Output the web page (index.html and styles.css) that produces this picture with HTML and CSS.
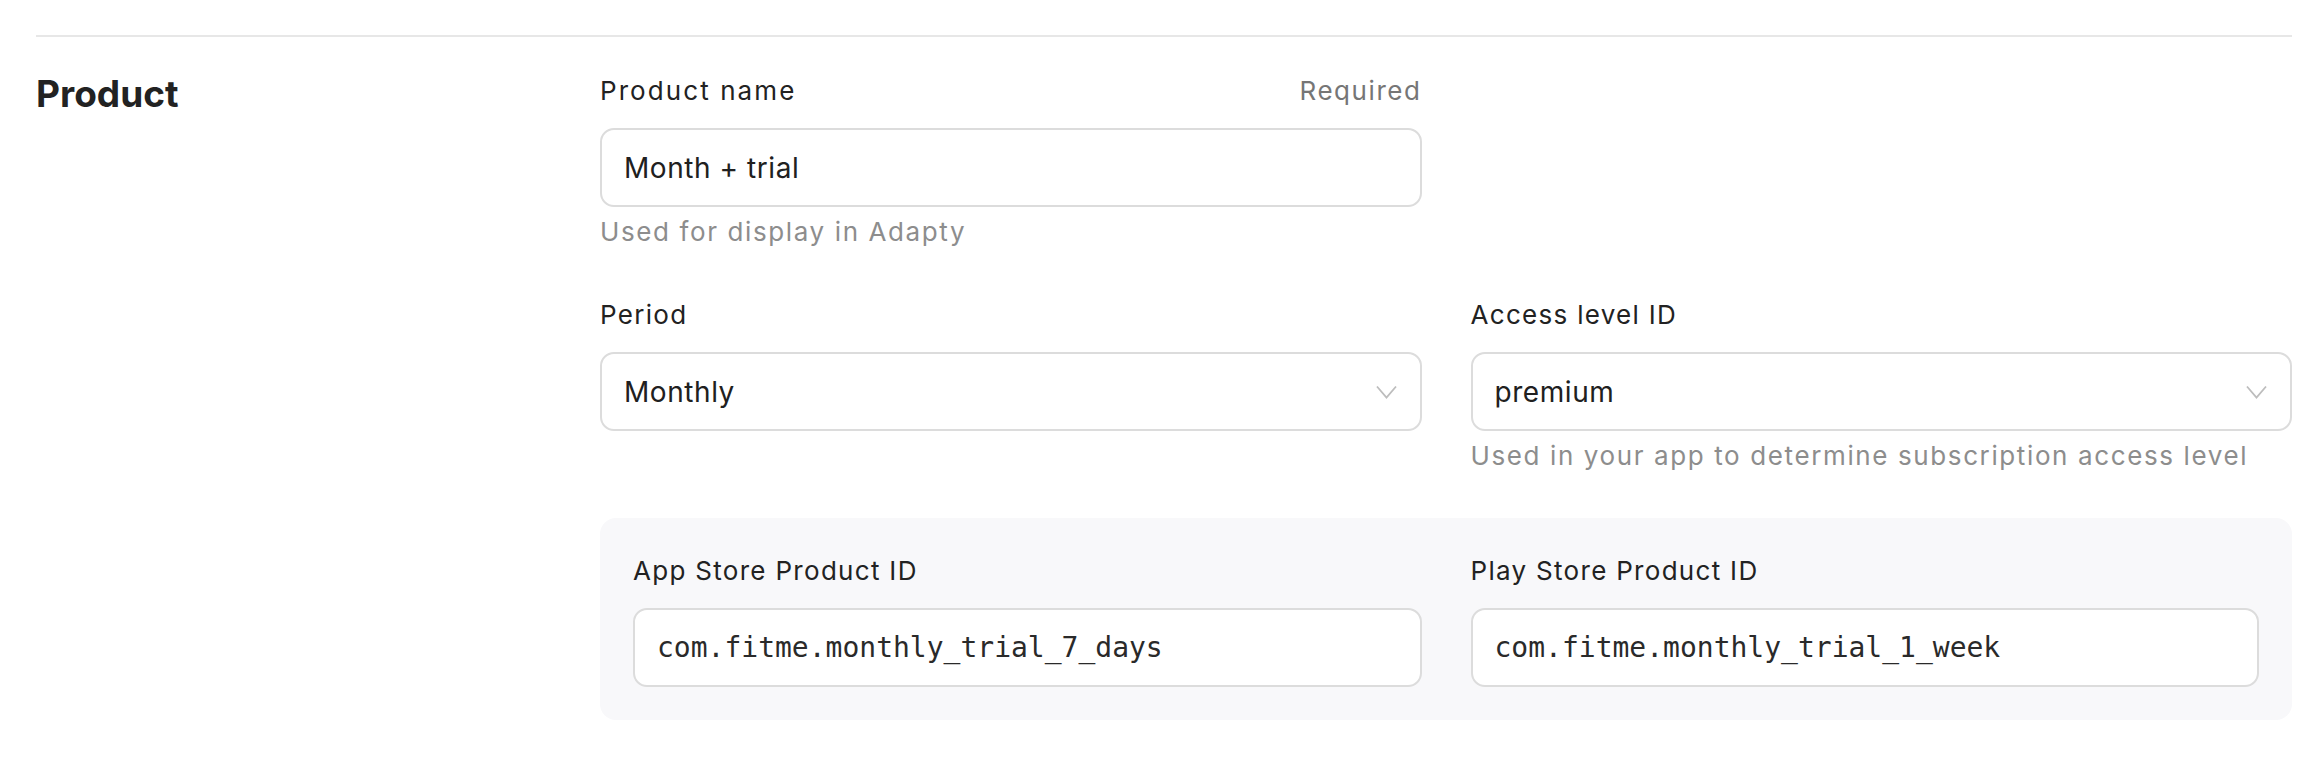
FILE: index.html
```html
<!DOCTYPE html>
<html lang="en">
<head>
<meta charset="utf-8">
<title>Product</title>
<link rel="stylesheet" href="styles.css">
</head>
<body>
<div class="page">
  <div class="divider"></div>
  <section class="section">
    <h2 class="section-title">Product</h2>
    <div class="form">
      <div class="row">
        <div class="field">
          <div class="label-row">
            <span class="label label-wide">Product name</span>
            <span class="required">Required</span>
          </div>
          <div class="input">Month + trial</div>
          <div class="hint">Used for display in Adapty</div>
        </div>
        <div class="field"></div>
      </div>
      <div class="row">
        <div class="field">
          <div class="label-row"><span class="label">Period</span></div>
          <div class="input select">
            <span>Monthly</span>
            <svg class="chevron" width="21" height="14" viewBox="0 0 21 14"><polyline points="1,1.5 10.5,12.5 20,1.5" fill="none" stroke="#bdbdbd" stroke-width="1.8"/></svg>
          </div>
        </div>
        <div class="field">
          <div class="label-row"><span class="label">Access level ID</span></div>
          <div class="input select">
            <span>premium</span>
            <svg class="chevron" width="21" height="14" viewBox="0 0 21 14"><polyline points="1,1.5 10.5,12.5 20,1.5" fill="none" stroke="#bdbdbd" stroke-width="1.8"/></svg>
          </div>
          <div class="hint">Used in your app to determine subscription access level</div>
        </div>
      </div>
      <div class="stores">
        <div class="field">
          <div class="label-row"><span class="label">App Store Product ID</span></div>
          <div class="input mono">com.fitme.monthly_trial_7_days</div>
        </div>
        <div class="field">
          <div class="label-row"><span class="label">Play Store Product ID</span></div>
          <div class="input mono">com.fitme.monthly_trial_1_week</div>
        </div>
      </div>
    </div>
  </section>
</div>
</body>
</html>
```
FILE: styles.css
```css
* { box-sizing: border-box; }
html, body { margin: 0; padding: 0; background: #ffffff; }
body {
  font-family: Inter, "Noto Sans", sans-serif;
  color: #212121;
}
.page {
  padding: 35px 24px 0 36px;
}
.divider {
  height: 2px;
  background: #e7e7e7;
}
.section {
  display: grid;
  grid-template-columns: 564px 1fr;
  padding-top: 35px;
}
.section-title {
  margin: 0;
  font-size: 37px;
  line-height: 44px;
  font-weight: 700;
  color: #222222;
}
.form {
  display: flex;
  flex-direction: column;
  gap: 47px;
  padding-top: 1px;
}
.row {
  display: grid;
  grid-template-columns: 1fr 1fr;
  column-gap: 49px;
}
.field {
  display: flex;
  flex-direction: column;
}
.label-row {
  display: flex;
  justify-content: space-between;
  align-items: baseline;
  font-size: 26px;
  line-height: 36px;
  margin-bottom: 19px;
  letter-spacing: 0.05em;
}
.label { color: #222222; }
.label-wide { letter-spacing: 0.08em; }
.required { color: #767676; letter-spacing: 0.06em; }
.input {
  height: 79px;
  border: 2px solid #dcdcdc;
  border-radius: 14px;
  background: #ffffff;
  padding: 0 22px;
  display: flex;
  align-items: center;
  font-size: 28px;
  color: #202020;
  letter-spacing: 0.02em;
}
.select {
  justify-content: space-between;
}
.chevron {
  margin-right: 1px;
  flex: none;
}
.hint {
  margin-top: 7px;
  font-size: 26px;
  line-height: 36px;
  color: #8d8d8d;
  letter-spacing: 0.062em;
}
.stores {
  display: grid;
  grid-template-columns: 1fr 1fr;
  column-gap: 49px;
  background: #f8f8fa;
  border-radius: 16px;
  padding: 35px 33px 33px 33px;
  margin-top: -3px;
}
.mono {
  font-family: "DejaVu Sans Mono", "Liberation Mono", monospace;
  font-size: 28px;
  letter-spacing: 0;
  color: #2a2a2a;
}
```
